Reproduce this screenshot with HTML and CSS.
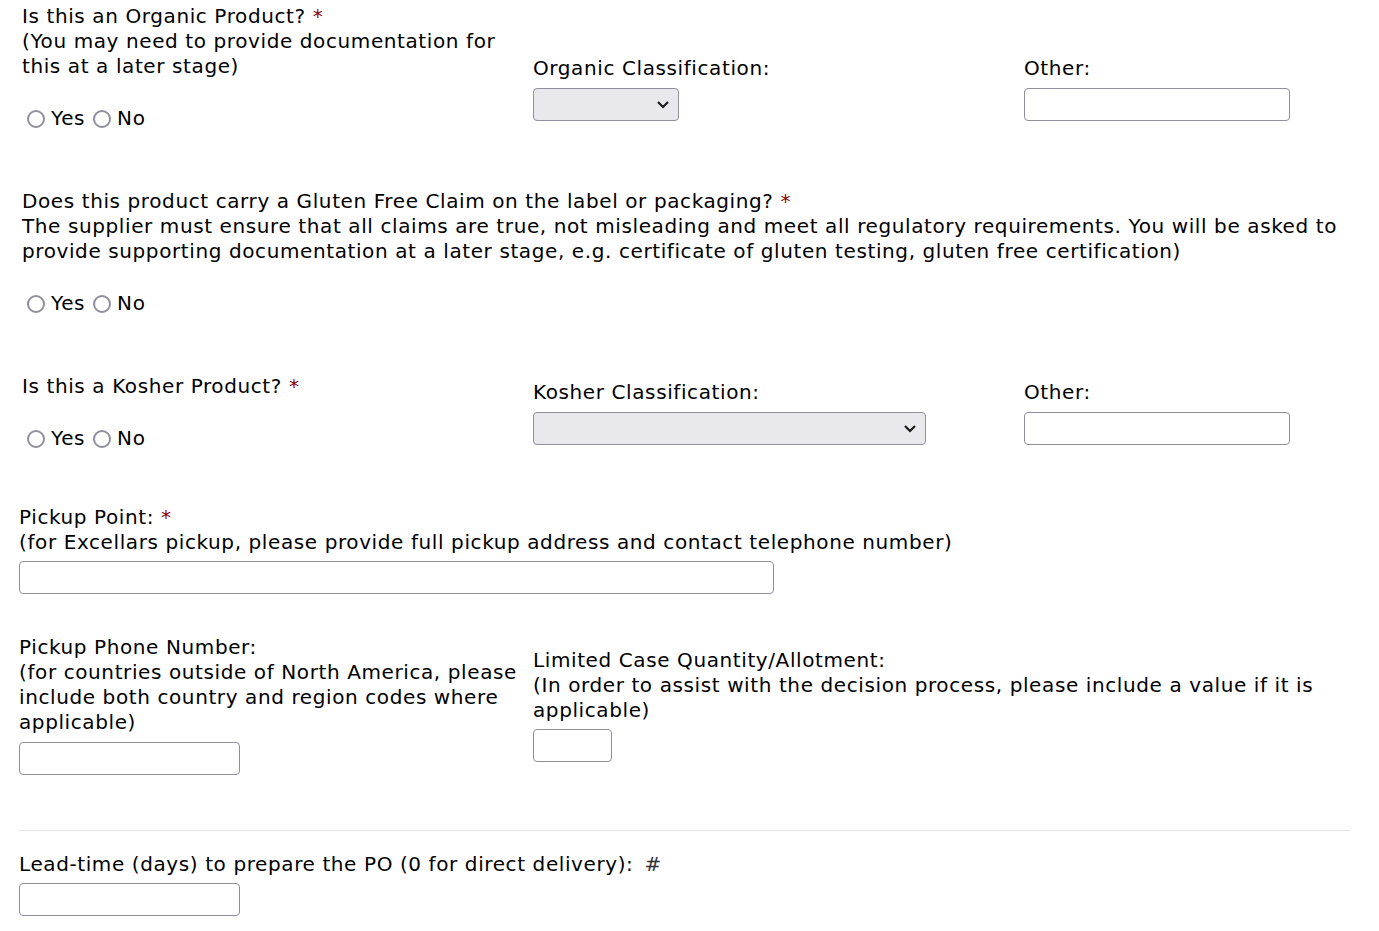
FILE: index.html
```html
<!DOCTYPE html>
<html lang="en">
  <head>
    <meta charset="UTF-8" />
    <meta name="viewport" content="width=device-width, initial-scale=1.0" />
    <title>Product Details</title>
    <link rel="stylesheet" href="styles.css">
  </head>
  <body>
    <form class="form" id="product_form">

      <!-- organic -->
      <div class="row row-organic">
        <div class="cell cell-indent">
          <div class="label">
            Is this an Organic Product? <span class="req">*</span><br />
            (You may need to provide documentation for<br />
            this at a later stage)
          </div>
          <div class="radios">
            <label><input type="radio" name="organic" value="yes" />Yes</label>
            <label><input type="radio" name="organic" value="no" />No</label>
          </div>
        </div>
        <div class="cell cell-top">
          <label class="label" for="organicClass">Organic Classification:</label>
          <div class="select-wrap sel-sm">
            <select id="organicClass" name="organic_class"><option></option></select>
            <svg class="chev" width="14" height="9" viewBox="0 0 14 9"><path d="M2 2l5 5 5-5" fill="none" stroke="#1a1a1a" stroke-width="2.2" /></svg>
          </div>
        </div>
        <div class="cell cell-top">
          <label class="label" for="organicOther">Other:</label>
          <input type="text" id="organicOther" name="organic_other" class="txt txt-other" />
        </div>
      </div>

      <!-- gluten -->
      <div class="row row-gluten">
        <div class="cell cell-indent cell-wide">
          <div class="label">
            Does this product carry a Gluten Free Claim on the label or packaging? <span class="req">*</span><br />
            The supplier must ensure that all claims are true, not misleading and meet all regulatory requirements. You will be asked to<br />
            provide supporting documentation at a later stage, e.g. certificate of gluten testing, gluten free certification)
          </div>
          <div class="radios">
            <label><input type="radio" name="gluten" value="yes" />Yes</label>
            <label><input type="radio" name="gluten" value="no" />No</label>
          </div>
        </div>
      </div>

      <!-- kosher -->
      <div class="row row-kosher">
        <div class="cell cell-indent">
          <div class="label">Is this a Kosher Product? <span class="req">*</span></div>
          <div class="radios">
            <label><input type="radio" name="kosher" value="yes" />Yes</label>
            <label><input type="radio" name="kosher" value="no" />No</label>
          </div>
        </div>
        <div class="cell">
          <label class="label" for="kosherClass">Kosher Classification:</label>
          <div class="select-wrap sel-lg">
            <select id="kosherClass" name="kosher_class"><option></option></select>
            <svg class="chev" width="14" height="9" viewBox="0 0 14 9"><path d="M2 2l5 5 5-5" fill="none" stroke="#1a1a1a" stroke-width="2.2" /></svg>
          </div>
        </div>
        <div class="cell">
          <label class="label" for="kosherOther">Other:</label>
          <input type="text" id="kosherOther" name="kosher_other" class="txt txt-other" />
        </div>
      </div>

      <!-- pickup point -->
      <div class="row row-pickup">
        <div class="cell cell-wide">
          <label class="label" for="pickupPoint">
            Pickup Point: <span class="req">*</span><br />
            (for Excellars pickup, please provide full pickup address and contact telephone number)
          </label>
          <input type="text" id="pickupPoint" name="pickup_point" class="txt txt-pickup" />
        </div>
      </div>

      <!-- phone + allotment -->
      <div class="row row-phone">
        <div class="cell">
          <label class="label" for="pickupPhone">
            Pickup Phone Number:<br />
            (for countries outside of North America, please<br />
            include both country and region codes where<br />
            applicable)
          </label>
          <input type="text" id="pickupPhone" name="pickup_phone" class="txt txt-short" />
        </div>
        <div class="cell cell-span">
          <label class="label" for="allotment">
            Limited Case Quantity/Allotment:<br />
            (In order to assist with the decision process, please include a value if it is<br />
            applicable)
          </label>
          <input type="text" id="allotment" name="allotment" class="txt txt-tiny" />
        </div>
      </div>

      <hr class="divider" />

      <!-- lead time -->
      <div class="row row-lead">
        <div class="cell cell-wide">
          <label class="label" for="leadTime">Lead-time (days) to prepare the PO (0 for direct delivery): <span class="hash">#</span></label>
          <input type="text" id="leadTime" name="lead_time" class="txt txt-short" />
        </div>
      </div>

    </form>
  </body>
</html>
```

FILE: styles.css
```css
body {
  margin: 0;
  padding: 4px 0 0 0;
  font-family: "DejaVu Sans", Verdana, sans-serif;
  font-size: 20px;
  line-height: 25px;
  letter-spacing: 0.6px;
  color: #000;
  background: #fff;
}

.form {
  padding: 0 20px 0 19px;
}

/* three column rows */
.row {
  display: grid;
  grid-template-columns: 514px 491px 1fr;
  align-items: center;
}

.cell-indent {
  padding-left: 3px;
}

.cell-wide {
  grid-column: 1 / 4;
}

.cell-span {
  grid-column: 2 / 4;
}

.cell-top {
  align-self: start;
  margin-top: 52px;
}

.label {
  display: block;
  white-space: nowrap;
}

.req {
  color: #8b0000;
}

.hash {
  color: #333;
  margin-left: 4px;
}

/* radio buttons */
.radios {
  display: flex;
  align-items: center;
  height: 25px;
  margin-top: 27px;
}

.radios label {
  display: flex;
  align-items: center;
  margin-right: 3px;
}

.radios input {
  appearance: none;
  -webkit-appearance: none;
  flex: none;
  width: 18px;
  height: 18px;
  margin: 1px 6px 0 5px;
  border: 2px solid #8f8f9d;
  border-radius: 50%;
  background: #fff;
  box-sizing: border-box;
}

/* text inputs */
.txt {
  display: block;
  box-sizing: border-box;
  height: 33px;
  margin: 7px 0 0 0;
  border: 1px solid #8f8f9d;
  border-radius: 4px;
  background: #fff;
  font: inherit;
}

.txt-other { width: 266px; }
.txt-pickup { width: 755px; margin-top: 6px; }
.txt-short { width: 221px; }
.txt-tiny { width: 79px; margin-top: 6px; }

/* selects */
.select-wrap {
  position: relative;
  margin-top: 7px;
  height: 33px;
}

.select-wrap select {
  appearance: none;
  -webkit-appearance: none;
  width: 100%;
  height: 33px;
  box-sizing: border-box;
  border: 1px solid #8f8f9d;
  border-radius: 4px;
  background: #e9e9ed;
  font: inherit;
}

.select-wrap .chev {
  position: absolute;
  right: 9px;
  top: 12px;
  pointer-events: none;
}

.sel-sm { width: 146px; }
.sel-lg { width: 393px; }

/* vertical rhythm */
.row-organic { margin-bottom: 58px; }
.row-gluten { margin-bottom: 58px; }
.row-kosher { margin-bottom: 54px; }
.row-pickup { margin-bottom: 41px; }

.divider {
  border: none;
  border-top: 1px solid #e3e3e3;
  margin: 55px 9px 20px 0;
}

.row-lead .label {
  margin-top: 1px;
}

.row-lead .txt {
  margin-top: 6px;
}
```
